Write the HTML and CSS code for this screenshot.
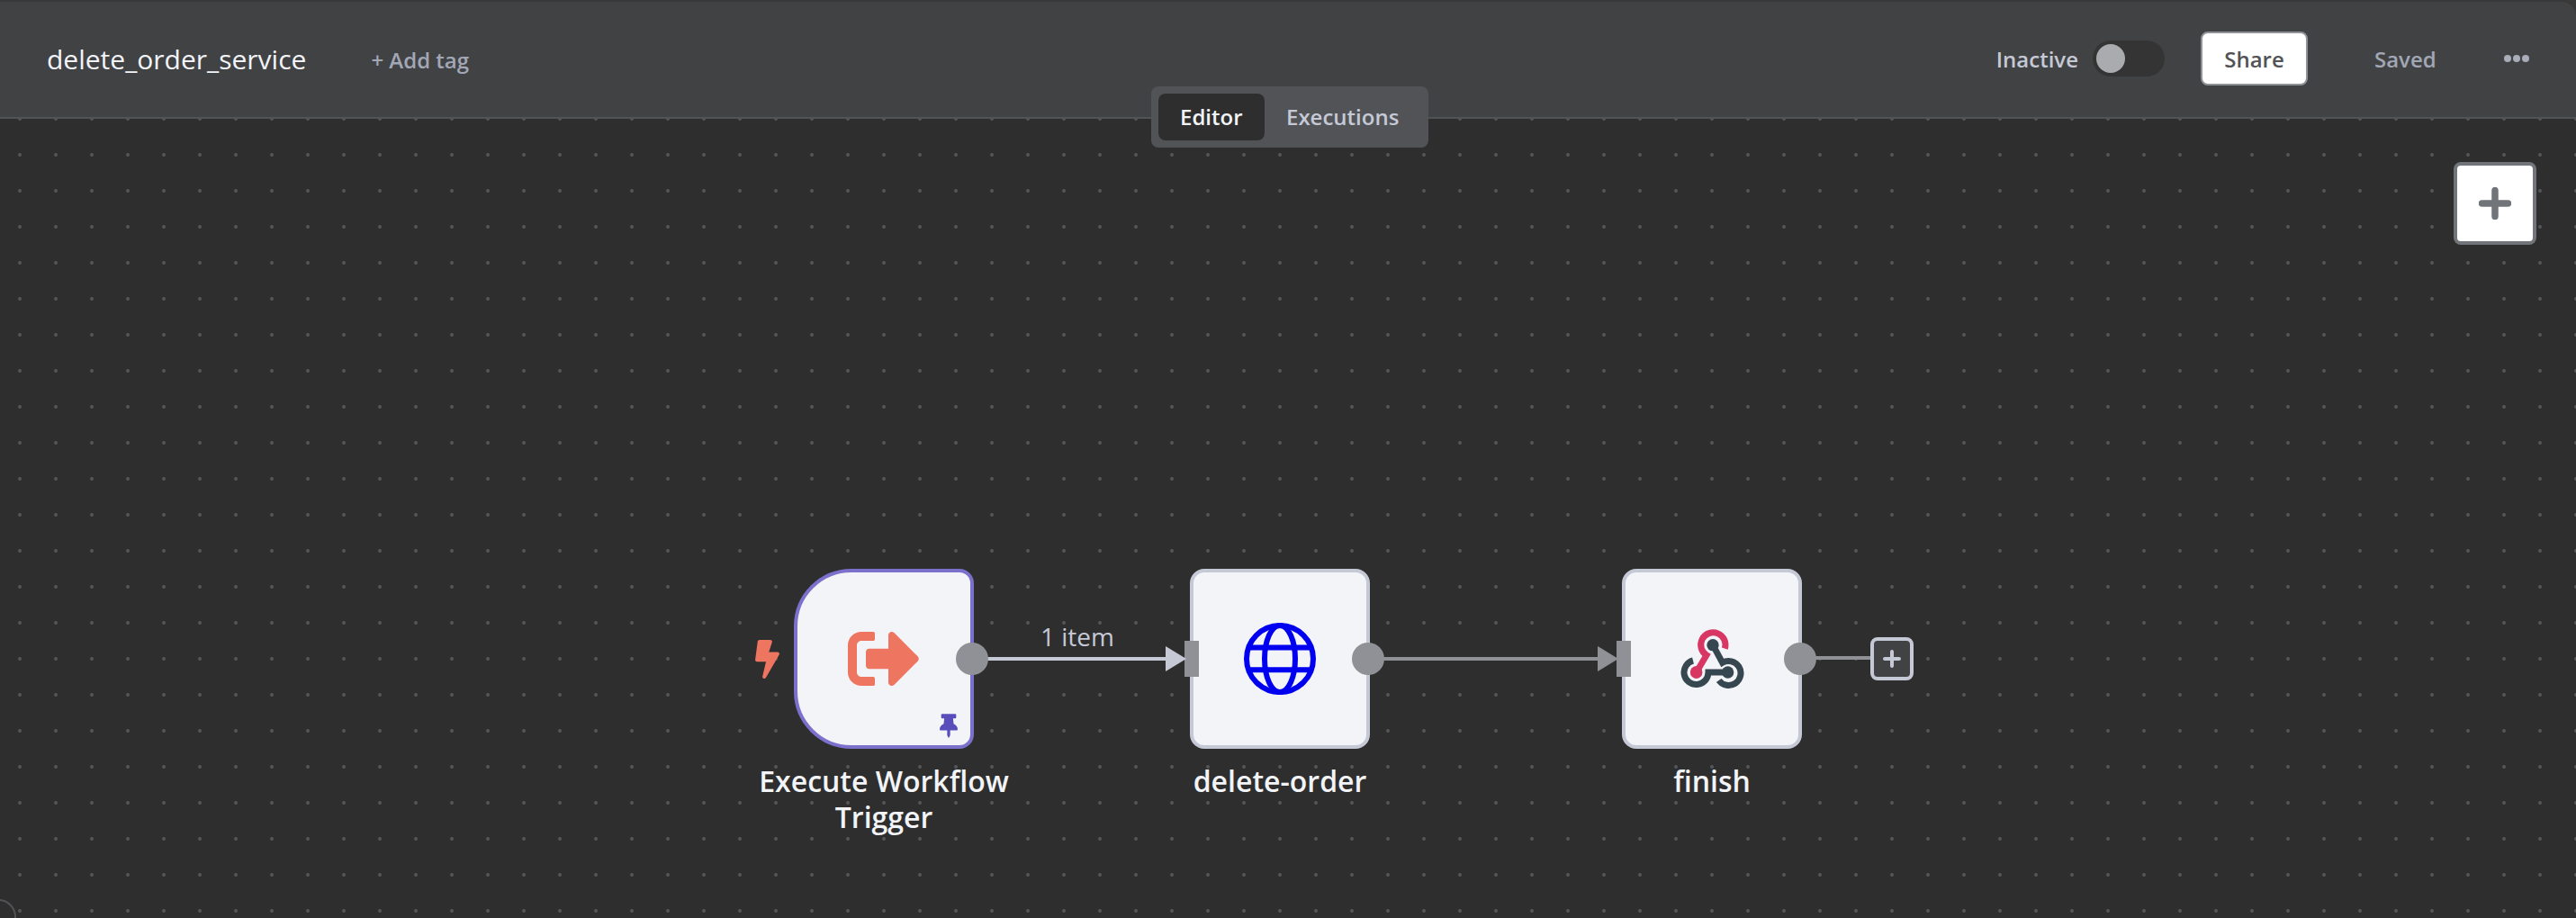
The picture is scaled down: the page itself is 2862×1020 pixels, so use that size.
FILE: index.html
```html
<!DOCTYPE html>
<html lang="en">
<head>
<meta charset="utf-8">
<title>delete_order_service</title>
<link rel="stylesheet" href="styles.css">
</head>
<body>
<div class="app">
  <header class="header">
    <div class="header-left">
      <span class="title">delete_order_service</span>
      <span class="add-tag medium">+ Add tag</span>
    </div>
    <div class="header-right">
      <span class="status medium">Inactive</span>
      <span class="toggle"><span class="knob"></span></span>
      <button class="share medium">Share</button>
      <span class="saved medium">Saved</span>
      <svg class="more" viewBox="0 0 28 8"><circle cx="4" cy="4" r="4"/><circle cx="14" cy="4" r="4"/><circle cx="24" cy="4" r="4"/></svg>
    </div>
    <nav class="tabs">
      <span class="tab medium active">Editor</span>
      <span class="tab medium">Executions</span>
    </nav>
  </header>
  <main class="canvas">
    <button class="add-node"><svg viewBox="0 0 36 36"><path d="M18 3.500v29M3.500 18h29"/></svg></button>
    <div class="corner-circle"></div>

    <div class="node trigger">
      <svg class="bolt" viewBox="0 0 320 512"><path d="M296 160H180.6l42.6-129.8C227.2 15 215.7 0 200 0H56C44 0 33.8 8.9 32.2 20.8l-32 240C-1.7 275.2 9.5 288 24 288h118.7L96.6 482.5c-3.6 15.2 8 29.5 23.3 29.5 8.4 0 16.4-4.4 20.8-12l176-304c9.3-15.9-2.2-36-20.7-36z"/></svg>
      <div class="box">
        <svg class="exec" viewBox="0 0 512 512"><path d="M497 273L329 441c-15 15-41 4.5-41-17v-96H152c-13.3 0-24-10.7-24-24v-96c0-13.3 10.7-24 24-24h136V88c0-21.4 25.9-32 41-17l168 168c9.3 9.4 9.3 24.6 0 34zM192 436v-40c0-6.6-5.4-12-12-12H96c-17.7 0-32-14.3-32-32V160c0-17.7 14.3-32 32-32h84c6.6 0 12-5.4 12-12V76c0-6.6-5.4-12-12-12H96c-53 0-96 43-96 96v192c0 53 43 96 96 96h84c6.6 0 12-5.4 12-12z"/></svg>
        <svg class="pin" viewBox="0 0 384 512"><path d="M298.028 214.267L285.793 96H328c13.255 0 24-10.745 24-24V24c0-13.255-10.745-24-24-24H56C42.745 0 32 10.745 32 24v48c0 13.255 10.745 24 24 24h42.207L85.972 214.267C37.465 236.82 0 277.261 0 328c0 13.255 10.745 24 24 24h136v104.007c0 1.242.289 2.467.845 3.578l24 48c2.941 5.882 11.364 5.893 14.311 0l24-48a8.008 8.008 0 0 0 .845-3.578V352h136c13.255 0 24-10.745 24-24-.001-51.183-37.983-91.42-85.973-113.733z"/></svg>
      </div>
      <div class="label">Execute Workflow<br>Trigger</div>
    </div>

    <div class="node request">
      <div class="box">
        <svg class="globe" viewBox="0 0 80 80"><circle cx="40" cy="40" r="37"/><ellipse cx="40" cy="40" rx="17" ry="37"/><path d="M6 27.500h68M6 52.300h68"/></svg>
      </div>
      <div class="label">delete-order</div>
    </div>

    <div class="node finish">
      <div class="box">
        <svg class="hook" viewBox="254 231 228 210">
          <path class="pink" d="M411 302A41 41 0 1 0 350 324L316 381"/>
          <circle class="pink-dot" cx="316" cy="381" r="20"/>
          <path class="slate" d="M371 290L403 349A40.500 40.500 0 1 1 391 408"/>
          <path class="slate" d="M421 381H356A40.500 40.500 0 1 1 305 342"/>
          <circle class="pink-dot" cx="316" cy="381" r="20"/>
          <circle class="slate-dot" cx="371" cy="290" r="20"/>
          <circle class="slate-dot" cx="421" cy="381" r="20"/>
        </svg>
      </div>
      <div class="label">finish</div>
    </div>

    <svg class="wires" viewBox="0 132 2862 888">
      <path class="wire light" d="M1080 732H1296"/>
      <path class="wire" d="M1520 732H1776M2000 731H2080"/>
      <rect x="1316" y="712" width="16" height="40"/>
      <rect x="1796" y="712" width="16" height="40"/>
      <path class="light-fill" d="M1295 718L1318 732L1295 746Z"/>
      <path d="M1775 718L1798 732L1775 746Z"/>
      <circle cx="1080" cy="732" r="18"/>
      <circle cx="1520" cy="732" r="18"/>
      <circle cx="2000" cy="732" r="18"/>
    </svg>
    <span class="wire-label">1 item</span>
    <button class="plus-end"><svg viewBox="0 0 20 20"><path d="M10 2v16M2 10h16"/></svg></button>
  </main>
</div>
</body>
</html>
```
FILE: styles.css
```css
* { box-sizing: border-box; }
body { margin: 0; background: #2e2e2e; font-family: "Open Sans", sans-serif; font-weight: 400; }
button { padding: 0; font-family: inherit; }
svg { display: block; }
.app { width: 2862px; height: 1020px; display: flex; flex-direction: column; overflow: hidden; background: #39393a; padding-top: 2px; }

.medium { font-size: 24px; font-weight: 600; }

.header {
  position: relative; z-index: 2; height: 130px; flex: none;
  display: flex; justify-content: space-between; align-items: center;
  padding: 0 52px 2px 52px; background: #414244;
  border-bottom: 2px solid #525356; border-top-right-radius: 16px;
}
.header-left, .header-right { display: flex; align-items: center; }
.title { font-size: 30px; color: #f2f4f8; }
.add-tag { margin-left: 72px; color: #a2a7b5; padding-top: 2px; }
.status { color: #c5c9d6; padding-top: 1px; }
.toggle { width: 80px; height: 40px; margin-left: 16px; padding: 4px; border-radius: 20px; background: #343434; }
.knob { display: block; width: 32px; height: 32px; border-radius: 50%; background: #aaabae; }
.share {
  width: 119px; height: 60px; margin-left: 40px; border: 2px solid #909298; border-radius: 8px;
  background: #fff; color: #525356;
}
.saved { width: 68px; margin-left: 74px; color: #a2a7b5; }
.more { width: 28px; height: 8px; margin-left: 76px; fill: #a9adba; }
.tabs {
  position: absolute; left: 1279px; top: 94px; height: 68px; padding: 8px; display: flex;
  background: #525356; border-radius: 8px; width: 308px;
}
.tab { padding: 0 24px; line-height: 52px; color: #c5c9d6; border-radius: 8px; }
.tab.active { width: 118px; background: #2e2e2e; color: #f2f4f8; }

.canvas {
  position: relative; flex: 1;
  background: radial-gradient(circle at 20px 20px, #525356 1.700px, transparent 2.300px) 2px -20px / 40px 40px, #2e2e2e;
}
.add-node {
  position: absolute; left: 2726px; top: 48px; width: 92px; height: 92px;
  display: flex; align-items: center; justify-content: center;
  background: #fff; border: 4px solid #717479; border-radius: 8px;
}
.add-node svg { width: 36px; height: 36px; stroke: #717479; stroke-width: 7.500px; stroke-linecap: round; }
.corner-circle { position: absolute; left: -22px; top: 867px; width: 40px; height: 40px; border: 2px solid #525356; border-radius: 50%; }

.node { position: absolute; top: 500px; width: 200px; }
.trigger { left: 882px; }
.request { left: 1322px; }
.finish { left: 1802px; }
.box {
  height: 200px; display: flex; align-items: center; justify-content: center;
  background: #f2f4f8; border: 4px solid #c5c9d6; border-radius: 16px;
}
.trigger .box { position: relative; border-color: #7b70cb; border-radius: 64px 16px 16px 64px; }
.label {
  width: 320px; margin: 16px -60px 0; font-size: 32px; line-height: 40px; text-align: center;
  color: #f2f4f8; font-weight: 600;
}
.bolt { position: absolute; left: -43px; top: 79px; width: 27px; height: 43px; fill: #ee7661; }
.exec { width: 80px; height: 80px; fill: #ee7661; }
.pin { position: absolute; right: 14px; bottom: 8px; width: 20px; height: 27px; fill: #584dbb; }
.globe { width: 80px; height: 80px; fill: none; stroke: #0000f0; stroke-width: 6px; }
.hook { width: 76px; height: 70px; fill: none; stroke-width: 21px; }
.pink { stroke: #d83763; }
.slate { stroke: #37474f; }
.pink-dot { fill: #d83763; }
.slate-dot { fill: #37474f; }

.wires { position: absolute; left: 0; top: 0; width: 2862px; height: 888px; fill: #909196; }
.wire { stroke: #909196; stroke-width: 4px; }
.wire.light { stroke: #c5c9d6; }
.light-fill { fill: #c5c9d6; }
.wire-label { position: absolute; left: 1156px; top: 555px; font-size: 28px; line-height: 40px; color: #c5c9d6; }
.plus-end {
  position: absolute; left: 2078px; top: 576px; width: 48px; height: 48px;
  display: flex; align-items: center; justify-content: center;
  background: #414244; border: 4px solid #c5c9d6; border-radius: 8px;
}
.plus-end svg { width: 20px; height: 20px; stroke: #c5c9d6; stroke-width: 4px; stroke-linecap: round; }
```
